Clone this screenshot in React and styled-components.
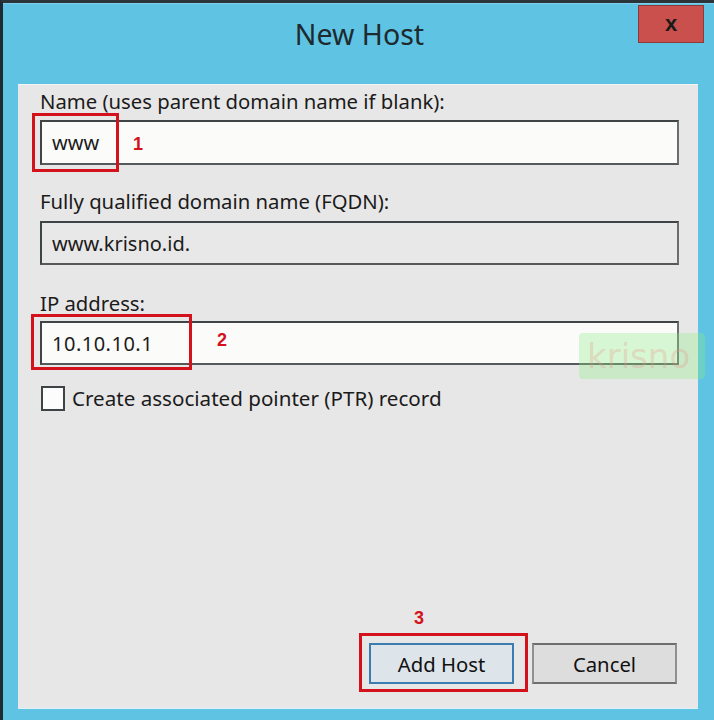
import React from 'react';
import styled, {createGlobalStyle} from 'styled-components';


//===============================================
//Styled Components
//===============================================
const GlobalStyle = createGlobalStyle`
  html, body {
    margin: 0;
    padding: 0;
    background: #5fc3e4;
  }
  body {
    font-family: "Noto Sans", "Open Sans", sans-serif;
    color: #1b1b1b;
  }
`;

const Window = styled.div`
  position: relative;
  width: 714px;
  height: 720px;
  box-sizing: border-box;
  display: flex;
  flex-direction: column;
  background: #5fc3e4;
  border-left: 3px solid #1d2b33;
  border-top: 3px solid #2a3439;
  box-shadow: inset 0 1px 0 #7fd0ec;
  overflow: hidden;
`;

const TitleBar = styled.div`
  position: relative;
  height: 81px;
  flex-shrink: 0;
  display: flex;
  justify-content: center;
  padding-top: 12px;
  box-sizing: border-box;
`;

const Title = styled.h1`
  margin: 0;
  font-family: "Noto Sans", "Open Sans", sans-serif;
  font-weight: 400;
  font-size: 28.5px;
  line-height: 38px;
  color: #1e2a2e;
  margin-left: 2px;
`;

const CloseButton = styled.div`
  position: absolute;
  top: 2px;
  right: 10px;
  width: 66px;
  height: 38px;
  background: #c9504c;
  border: 1px solid #8c3b38;
  box-sizing: border-box;
  display: flex;
  align-items: center;
  justify-content: center;
  font-family: "Liberation Sans", Arial, sans-serif;
  font-weight: 700;
  font-size: 22px;
  color: #1a1a1a;
`;

const Panel = styled.div`
  flex: 1;
  margin: 0 16px 12px 15px;
  background: #e8e7e7;
  border-top: 1px solid #f4f4f4;
  box-shadow: 0 1px 0 #dff1f8;
  padding: 4px 19px 0 22px;
  display: flex;
  flex-direction: column;
`;

const Label = styled.div`
  font-size: 20.3px;
  line-height: 24px;
  margin-top: ${p => p.$top || 0}px;
`;

const InputBox = styled.div`
  position: relative;
  height: ${p => p.$height || 45}px;
  margin-top: ${p => p.$gap || 7}px;
  box-sizing: border-box;
  border: 2px solid #4a4f52;
  border-color: #3f4447 #6a6e70 #55595b #3f4447;
  background: ${p => p.$disabled ? '#e9e8e8' : '#fbfbfa'};
  display: flex;
  align-items: center;
  padding-left: 10px;
  font-size: 20px;
  letter-spacing: ${p => p.$spaced ? '0.5px' : '0'};
`;

const Highlight = styled.div`
  position: absolute;
  left: ${p => p.$left}px;
  top: ${p => p.$top}px;
  width: ${p => p.$width}px;
  height: ${p => p.$height}px;
  border: 3px solid #d3121c;
  box-sizing: border-box;
  pointer-events: none;
`;

const StepNumber = styled.span`
  position: absolute;
  left: ${p => p.$left}px;
  top: ${p => p.$top}px;
  font-family: "Liberation Sans", Arial, sans-serif;
  font-weight: 700;
  font-size: 18px;
  line-height: 20px;
  letter-spacing: 0;
  color: #d3121c;
`;

const CheckRow = styled.label`
  display: flex;
  align-items: center;
  gap: 7px;
  margin-top: 19px;
  font-size: 20.6px;
`;

const CheckBox = styled.span`
  width: 24px;
  height: 25px;
  box-sizing: border-box;
  border: 2px solid #3e4346;
  background: #fcfcfc;
  margin-left: 1px;
  flex-shrink: 0;
`;

const ButtonRow = styled.div`
  margin-top: auto;
  margin-bottom: 24px;
  display: flex;
  justify-content: flex-end;
  gap: 18px;
  padding-right: 2px;
`;

const ButtonWrap = styled.div`
  position: relative;
`;

const DialogButton = styled.button`
  width: 145px;
  height: 41px;
  box-sizing: border-box;
  font-family: "Noto Sans", "Open Sans", sans-serif;
  font-size: 20.3px;
  color: #111;
  background: ${p => p.$primary ? '#dde4ea' : '#dedddd'};
  border: 2px solid;
  border-color: ${p => p.$primary ? '#3b7db0' : '#6d6d6d #8f8f8f #707070 #8f8f8f'};
  padding: 0;
`;

const Watermark = styled.div`
  position: absolute;
  left: 576px;
  top: 330px;
  width: 126px;
  height: 46px;
  background: rgba(140, 235, 130, 0.32);
  border-radius: 4px;
  font-family: "DejaVu Sans", sans-serif;
  font-size: 34px;
  line-height: 46px;
  color: rgba(230, 150, 140, 0.3);
  padding-left: 8px;
  box-sizing: border-box;
  overflow: hidden;
  pointer-events: none;
`;


//===============================================
//App
//===============================================
export default function App() {
  return (
    <Window>
      <GlobalStyle />
      <TitleBar>
        <Title>New Host</Title>
        <CloseButton>x</CloseButton>
      </TitleBar>

      <Panel>
        <Label>Name (uses parent domain name if blank):</Label>
        <InputBox $gap={7} $height={45}>
          www
          <Highlight $left={-10} $top={-9} $width={87} $height={59} />
          <StepNumber $left={91} $top={12}>1</StepNumber>
        </InputBox>

        <Label $top={24}>Fully qualified domain name (FQDN):</Label>
        <InputBox $gap={8} $height={44} $disabled>
          www.krisno.id.
        </InputBox>

        <Label $top={26}>IP address:</Label>
        <InputBox $gap={6} $height={44} $spaced>
          10.10.10.1
          <Highlight $left={-11} $top={-9} $width={161} $height={56} />
          <StepNumber $left={175} $top={7}>2</StepNumber>
        </InputBox>

        <CheckRow>
          <CheckBox />
          Create associated pointer (PTR) record
        </CheckRow>

        <ButtonRow>
          <ButtonWrap>
            <DialogButton $primary>Add Host</DialogButton>
            <Highlight $left={-10} $top={-10} $width={169} $height={59} />
            <StepNumber $left={45} $top={-35}>3</StepNumber>
          </ButtonWrap>
          <ButtonWrap>
            <DialogButton>Cancel</DialogButton>
          </ButtonWrap>
        </ButtonRow>
      </Panel>

      <Watermark>krisno</Watermark>
    </Window>
  );
}
